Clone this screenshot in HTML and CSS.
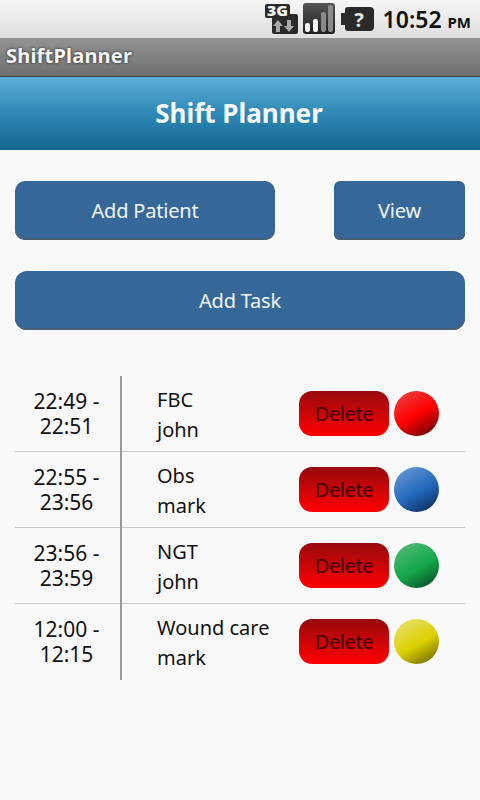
FILE: index.html
```html
<!DOCTYPE html>
<html lang="en">
<head>
  <meta charset="UTF-8" />
  <meta name="viewport" content="width=device-width, initial-scale=1.0"/>
  <title>ShiftPlanner</title>
  <link rel="stylesheet" href="styles.css">
</head>
<body>

  <div class="status-bar">
    <svg class="icon-3g" width="33" height="38" viewBox="0 0 33 38">
      <path d="M2 4h21a2 2 0 0 1 2 2v8h6a2 2 0 0 1 2 2v16a2 2 0 0 1-2 2H9a2 2 0 0 1-2-2V18H2a2 2 0 0 1-2-2V6a2 2 0 0 1 2-2z" fill="#2a2a2a"/>
      <text class="icon-3g-text" x="2" y="16" textLength="21" lengthAdjust="spacingAndGlyphs">3G</text>
      <path d="M13 20l-5 6h3v6h4v-6h3z" fill="#a8a8a8"/>
      <path d="M24 32l5-6h-3v-6h-4v6h-3z" fill="#a8a8a8"/>
    </svg>
    <svg class="icon-signal" width="32" height="38" viewBox="0 0 32 38">
      <defs>
        <linearGradient id="signalBg" x1="0" y1="0" x2="0" y2="1">
          <stop offset="0" stop-color="#555"/>
          <stop offset="1" stop-color="#1f1f1f"/>
        </linearGradient>
      </defs>
      <rect y="3" width="32" height="31" rx="3" fill="url(#signalBg)"/>
      <rect x="2" y="23" width="5" height="9" rx="2" fill="#f6f6f6"/>
      <rect x="10" y="19" width="5" height="13" rx="2" fill="#f6f6f6"/>
      <rect x="18" y="12" width="5" height="20" rx="2" fill="#8a8a8a"/>
      <rect x="25" y="5" width="5" height="27" rx="2" fill="#8a8a8a"/>
    </svg>
    <svg class="icon-battery" width="33" height="38" viewBox="0 0 33 38">
      <path d="M7 7h22a4 4 0 0 1 4 4v16a4 4 0 0 1-4 4H7a3 3 0 0 1-3-3v-3H0V13h4v-3a3 3 0 0 1 3-3z" fill="#2a2a2a"/>
      <text class="icon-battery-text" x="18" y="27" text-anchor="middle">?</text>
    </svg>
    <div class="clock">10:52 <span>PM</span></div>
  </div>

  <div class="title-bar">ShiftPlanner</div>

  <div class="header">Shift Planner</div>

  <div class="actions">
    <div class="actions-row">
      <button class="btn btn-patient">Add Patient</button>
      <button class="btn btn-view">View</button>
    </div>
    <button class="btn btn-task">Add Task</button>
  </div>

  <div class="shifts">
    <div class="shift">
      <div class="shift-time">22:49 -<br>22:51</div>
      <div class="shift-info">FBC<br>john</div>
      <button class="btn-delete">Delete</button>
      <div class="dot dot-red"></div>
    </div>
    <div class="shift">
      <div class="shift-time">22:55 -<br>23:56</div>
      <div class="shift-info">Obs<br>mark</div>
      <button class="btn-delete">Delete</button>
      <div class="dot dot-blue"></div>
    </div>
    <div class="shift">
      <div class="shift-time">23:56 -<br>23:59</div>
      <div class="shift-info">NGT<br>john</div>
      <button class="btn-delete">Delete</button>
      <div class="dot dot-green"></div>
    </div>
    <div class="shift">
      <div class="shift-time">12:00 -<br>12:15</div>
      <div class="shift-info">Wound care<br>mark</div>
      <button class="btn-delete">Delete</button>
      <div class="dot dot-yellow"></div>
    </div>
  </div>

</body>
</html>
```

FILE: styles.css
```css
body {
  margin: 0;
  width: 480px;
  height: 800px;
  overflow: hidden;
  background: #f9f9f9;
  color: #000;
  font-family: "Noto Sans", "Open Sans", sans-serif;
}
.status-bar {
  height: 38px;
  box-sizing: border-box;
  display: flex;
  align-items: center;
  justify-content: flex-end;
  padding: 0 9px 0 0;
  background: linear-gradient(#f6f6f6, #dedede);
}
.icon-3g {
  margin-right: 5px;
}
.icon-3g-text {
  font-family: "Noto Sans", sans-serif;
  font-size: 14px;
  font-weight: 900;
  fill: #f4f4f4;
}
.icon-signal {
  margin-right: 6px;
}
.icon-battery {
  margin-right: 9px;
}
.icon-battery-text {
  font-family: "Noto Sans", sans-serif;
  font-size: 20px;
  font-weight: 700;
  fill: #e4e4e4;
}
.clock {
  font-size: 23px;
  font-weight: 600;
  color: #111;
  white-space: pre;
}
.clock span {
  font-size: 15px;
  font-weight: 700;
}
.title-bar {
  height: 39px;
  box-sizing: border-box;
  padding-left: 6px;
  line-height: 36px;
  font-size: 20px;
  font-weight: 700;
  letter-spacing: 0.2px;
  color: #f6f6f6;
  text-shadow: 0 0 3px #222;
  background: linear-gradient(#949292, #6f6f6f);
  border-bottom: 1px solid #3c3c3c;
}
.header {
  height: 73px;
  line-height: 73px;
  padding-right: 2px;
  text-align: center;
  font-size: 26px;
  font-weight: 700;
  color: #f4f9fb;
  background: linear-gradient(#5aaed6, #2f88b5 50%, #12668f);
}
.actions {
  padding: 31px 15px 0;
}
.actions-row {
  display: flex;
  justify-content: space-between;
  margin-bottom: 31px;
}
.btn {
  display: block;
  height: 59px;
  padding: 0;
  border: none;
  border-radius: 10px;
  background: #356899;
  box-shadow: inset 0 -2px 0 #4a5f74;
  color: #f2f6fa;
  font-family: inherit;
  font-size: 20px;
  letter-spacing: -0.2px;
}
.btn-patient {
  width: 260px;
}
.btn-view {
  width: 131px;
  border-radius: 6px;
}
.btn-task {
  width: 450px;
  border-radius: 12px;
}
.shifts {
  margin: 46px 15px 0;
}
.shift {
  height: 76px;
  display: flex;
  align-items: center;
  box-sizing: border-box;
  border-bottom: 1px solid #ccc;
}
.shift:last-child {
  border-bottom-color: transparent;
}
.shift-time {
  width: 105px;
  height: 100%;
  box-sizing: border-box;
  padding: 13px 2px 0 0;
  flex: none;
  text-align: center;
  font-size: 21px;
  line-height: 25px;
  color: #111;
}
.shift-info {
  width: 142px;
  height: calc(100% + 1px);
  margin-bottom: -1px;
  box-sizing: border-box;
  padding: 9px 0 0 35px;
  flex: none;
  border-left: 2px solid #999;
  font-size: 20px;
  line-height: 30px;
  white-space: nowrap;
  color: #111;
}
.btn-delete {
  width: 90px;
  height: 45px;
  margin: 0 5px 0 37px;
  padding: 0;
  flex: none;
  border: none;
  border-radius: 13px;
  background: linear-gradient(#960a0e, #ff0000);
  color: #3c0003;
  font-family: inherit;
  font-size: 20px;
  letter-spacing: -0.4px;
}
.dot {
  width: 45px;
  height: 45px;
  flex: none;
  border-radius: 50%;
}
.dot-red {
  background: linear-gradient(150deg, #e84848, #ff0000 52%, #6e0000 92%);
}
.dot-blue {
  background: linear-gradient(150deg, #6d9dd6, #2468bb 55%, #0c2f5e 92%);
}
.dot-green {
  background: linear-gradient(150deg, #5cbb7c, #14a84a 55%, #0a5229 92%);
}
.dot-yellow {
  background: linear-gradient(150deg, #e8e27a, #dcd000 55%, #776e00 92%);
}
```
